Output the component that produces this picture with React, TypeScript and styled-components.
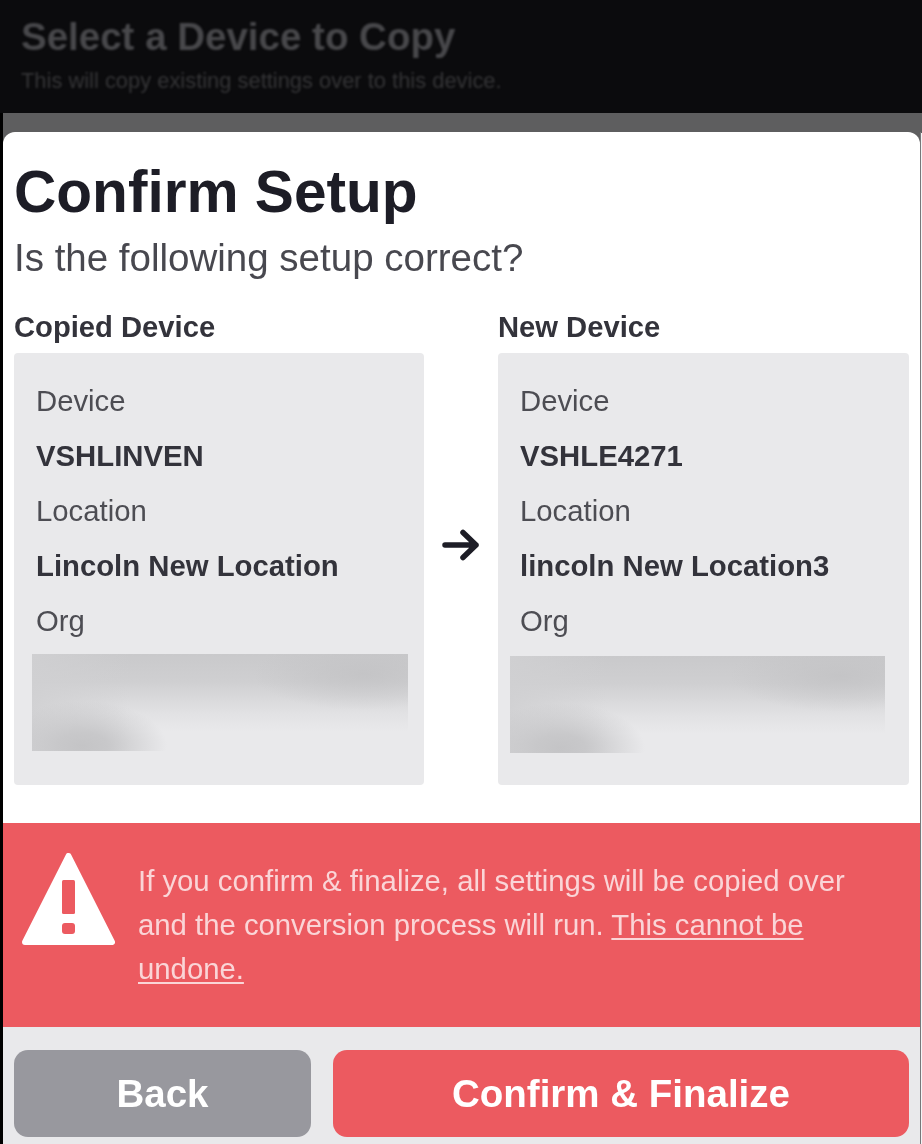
import React from "react";
import styled, { createGlobalStyle } from "styled-components";

const GlobalStyle = createGlobalStyle`
  html, body {
    margin: 0;
    padding: 0;
    background: #000;
  }
  * {
    box-sizing: border-box;
  }
`;

const Page = styled.div`
  width: 922px;
  height: 1144px;
  overflow: hidden;
  background: linear-gradient(to right, #000 3px, #f4f4f5 3px);
  font-family: "Liberation Sans", Arial, sans-serif;
  display: flex;
  flex-direction: column;
`;

const Backdrop = styled.header`
  height: 113px;
  flex: none;
  background: #0b0b0d;
  padding: 15px 0 0 21px;
`;

const BackdropTitle = styled.h2`
  margin: 0;
  font-size: 38.5px;
  line-height: 44px;
  font-weight: 700;
  color: #48484b;
  filter: blur(0.8px);
`;

const BackdropText = styled.p`
  margin: 10px 0 0;
  font-size: 21.9px;
  line-height: 24px;
  color: #353537;
  filter: blur(0.8px);
`;

const Band = styled.div`
  height: 20px;
  flex: none;
  background: #5e5e5f;
  margin-left: 3px;
`;

const SheetWrap = styled.div`
  flex: 1;
  background: #5e5e5f;
  margin: -1px 1px 0 3px;
  border-right: 1px solid #77777a;
  min-height: 0;
`;

const Sheet = styled.main`
  height: 100%;
  background: #fff;
  border-radius: 12px 12px 0 0;
  display: flex;
  flex-direction: column;
  overflow: hidden;
`;

const Intro = styled.section`
  padding: 26px 11px 0;
  filter: blur(0.6px);
`;

const Title = styled.h1`
  margin: 0;
  font-size: 58.6px;
  line-height: 68px;
  font-weight: 700;
  color: #1d1d26;
`;

const Subtitle = styled.p`
  margin: 10px 0 0;
  font-size: 38.5px;
  line-height: 44px;
  color: #48484f;
`;

const Compare = styled.section`
  display: grid;
  grid-template-columns: 410px 1fr 411px;
  padding: 0 11px;
  margin-top: 31px;
`;

const Side = styled.div`
  display: flex;
  flex-direction: column;
`;

const SideTitle = styled.h3`
  margin: 0 0 10px;
  font-size: 29.2px;
  line-height: 32px;
  font-weight: 700;
  color: #33333b;
  filter: blur(0.6px);
`;

const Card = styled.div`
  height: 432px;
  background: #e9e9eb;
  border-radius: 4px;
  padding: 20px 16px 0 18px;
`;

const Row = styled.div<{ $strong?: boolean }>`
  height: 55px;
  padding-left: 4px;
  font-size: 29.3px;
  line-height: 55px;
  font-weight: ${(props) => (props.$strong ? 700 : 400)};
  color: ${(props) => (props.$strong ? "#33333b" : "#4d4d53")};
  filter: blur(0.6px);
  white-space: nowrap;
`;

const Redacted = styled.div<{ $top: number; $left: number; $right: number }>`
  height: 97px;
  margin: ${(props) => props.$top}px ${(props) => props.$right}px 0 ${(props) => props.$left}px;
  background:
    radial-gradient(ellipse 85px 45px at 50px 92px, #c4c4c6 0%, #c8c8ca 30%, rgba(200, 200, 202, 0) 100%),
    radial-gradient(ellipse 110px 36px at 88% 20px, rgba(194, 194, 196, 0.8) 0%, rgba(194, 194, 196, 0) 100%),
    linear-gradient(to right, rgba(208, 208, 210, 0.9) 0%, rgba(208, 208, 210, 0) 26%),
    linear-gradient(to bottom, #c9c9cb 0%, #cfcfd1 28%, #e2e2e4 62%, #e9e9eb 80%);
`;

const ArrowSlot = styled.div`
  display: flex;
  align-items: center;
  justify-content: center;
  padding-bottom: 7px;
  filter: blur(0.4px);
`;

const Warning = styled.section`
  margin-top: 38px;
  height: 204px;
  background: #ec5a60;
  display: flex;
  align-items: flex-start;
  gap: 23px;
  padding: 30px 40px 0 19px;
`;

const WarningText = styled.p`
  margin: 6px 0 0;
  font-size: 29.3px;
  line-height: 44px;
  color: #fad5d7;
  filter: blur(0.6px);

  u {
    text-underline-offset: 3px;
  }
`;

const Footer = styled.footer`
  flex: 1;
  background: #e9e9eb;
  display: flex;
  gap: 22px;
  padding: 23px 11px 7px;
`;

const Button = styled.button<{ $primary?: boolean }>`
  flex: ${(props) => (props.$primary ? "0 0 576px" : "0 0 297px")};
  border: none;
  border-radius: 14px;
  background: ${(props) => (props.$primary ? "#ec5a60" : "#98989e")};
  color: #fff;
  font-family: inherit;
  font-size: 38.5px;
  font-weight: 700;
`;

const ButtonLabel = styled.span`
  display: block;
  filter: blur(0.5px);
`;

function DeviceCard({ title, device, location, top, left, right }: any) {
  return (
    <Side>
      <SideTitle>{title}</SideTitle>
      <Card>
        <Row>Device</Row>
        <Row $strong>{device}</Row>
        <Row>Location</Row>
        <Row $strong>{location}</Row>
        <Row>Org</Row>
        <Redacted $top={top} $left={left} $right={right} />
      </Card>
    </Side>
  );
}

function WarningIcon() {
  return (
    <svg width="93" height="93" viewBox="0 0 93 93" style={{ flex: "none" }}>
      <path d="M46.5 3 L90 89 H3 Z" fill="#fff" stroke="#fff" strokeWidth="6" strokeLinejoin="round" />
      <rect x="40" y="27" width="13" height="34" rx="1.5" fill="#ec5a60" />
      <rect x="40" y="70" width="13" height="11" rx="3" fill="#ec5a60" />
    </svg>
  );
}

function ArrowIcon() {
  return (
    <svg width="38" height="32" viewBox="0 0 38 32" fill="none">
      <path d="M3 16 H34 M21 3.5 L34 16 L21 28.5" stroke="#1d1d26" strokeWidth="5.5" strokeLinecap="round" strokeLinejoin="round" />
    </svg>
  );
}

export default function App() {
  return (
    <Page>
      <GlobalStyle />
      <Backdrop>
        <BackdropTitle>Select a Device to Copy</BackdropTitle>
        <BackdropText>This will copy existing settings over to this device.</BackdropText>
      </Backdrop>
      <Band />
      <SheetWrap>
        <Sheet>
          <Intro>
            <Title>Confirm Setup</Title>
            <Subtitle>Is the following setup correct?</Subtitle>
          </Intro>
          <Compare>
            <DeviceCard title="Copied Device" device="VSHLINVEN" location="Lincoln New Location" top={6} left={0} right={0} />
            <ArrowSlot>
              <ArrowIcon />
            </ArrowSlot>
            <DeviceCard title="New Device" device="VSHLE4271" location="lincoln New Location3" top={8} left={-6} right={8} />
          </Compare>
          <Warning>
            <WarningIcon />
            <WarningText>
              If you confirm &amp; finalize, all settings will be copied over and the conversion process will run.{" "}
              <u>This cannot be undone.</u>
            </WarningText>
          </Warning>
          <Footer>
            <Button>
              <ButtonLabel>Back</ButtonLabel>
            </Button>
            <Button $primary>
              <ButtonLabel>Confirm &amp; Finalize</ButtonLabel>
            </Button>
          </Footer>
        </Sheet>
      </SheetWrap>
    </Page>
  );
}
